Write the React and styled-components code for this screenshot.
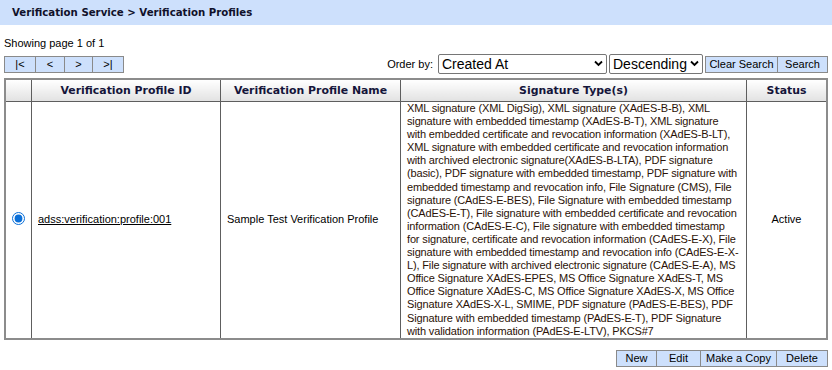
import React, { useState } from "react";
import styled, { createGlobalStyle } from "styled-components";

const GlobalStyle = createGlobalStyle`
  body {
    margin: 0;
    background: #fff;
    font-family: "Liberation Sans", Arial, sans-serif;
    font-size: 11px;
    color: #000;
  }
`;

const TitleBar = styled.div`
  height: 25px;
  background: #cde0fc;
  display: flex;
  align-items: center;
  padding-left: 12px;
  font-family: "DejaVu Sans", sans-serif;
  font-weight: bold;
  font-size: 10.2px;
  color: #10102a;
`;

const Content = styled.div`
  padding: 0 4px;
`;

const PageInfo = styled.div`
  padding-top: 12px;
  height: 17px;
  font-size: 11px;
`;

const Toolbar = styled.div`
  display: flex;
  align-items: center;
  justify-content: space-between;
  height: 20px;
`;

const Pager = styled.div`
  display: flex;
`;

const Btn = styled.button`
  height: 17px;
  width: ${(p) => p.w}px;
  background: #cde0fc;
  border: 1px solid #8a8a8a;
  margin-left: ${(p) => (p.first ? 0 : -1)}px;
  padding: 0;
  font-family: "Liberation Sans", Arial, sans-serif;
  font-size: 11px;
  color: #000;
  cursor: pointer;
`;

const OrderGroup = styled.div`
  display: flex;
  align-items: center;
  gap: 2px;
`;

const OrderLabel = styled.span`
  font-size: 11px;
  margin-right: 3px;
`;

const SelectWrap = styled.div`
  position: relative;
  width: ${(p) => p.w}px;
  height: 20px;
`;

const Select = styled.select`
  appearance: none;
  width: 100%;
  height: 20px;
  font-family: "Liberation Sans", Arial, sans-serif;
  font-size: 14px;
  border: 1px solid #767676;
  border-radius: 2px;
  background: #fff;
  padding: 0 3px;
  color: #000;
`;

const Chevron = styled.svg`
  position: absolute;
  right: 4px;
  top: 6px;
  pointer-events: none;
`;

const Table = styled.table`
  margin-top: 4px;
  width: 824px;
  border-collapse: collapse;
  border: 2px solid #8c8c8c;
`;

const Th = styled.th`
  height: 21px;
  padding: 0;
  border: 1px solid #5e5e5e;
  background: linear-gradient(#ffffff, #e2e2e2);
  font-family: "DejaVu Sans", sans-serif;
  font-size: 10.9px;
  font-weight: bold;
  color: #15153a;
  width: ${(p) => p.w}px;
`;

const Td = styled.td`
  border: 1px solid #5e5e5e;
  padding: ${(p) => (p.pad ? p.pad : "0 6px")};
  text-align: ${(p) => p.align || "left"};
  vertical-align: middle;
  font-size: 11px;
  line-height: 13.1px;
  color: ${(p) => p.color || "#000"};
`;

const SigLine = styled.span`
  display: block;
  white-space: nowrap;
  letter-spacing: -0.15px;
`;

const IdLink = styled.a`
  color: #000;
  text-decoration: underline;
`;

const Radio = styled.input`
  margin: 0;
  width: 13px;
  height: 13px;
  accent-color: #0a6fd8;
`;

const Actions = styled.div`
  display: flex;
  justify-content: flex-end;
  margin-top: 10px;
`;

const sigLines = [
  "XML signature (XML DigSig), XML signature (XAdES-B-B), XML",
  "signature with embedded timestamp (XAdES-B-T), XML signature",
  "with embedded certificate and revocation information (XAdES-B-LT),",
  "XML signature with embedded certificate and revocation information",
  "with archived electronic signature(XAdES-B-LTA), PDF signature",
  "(basic), PDF signature with embedded timestamp, PDF signature with",
  "embedded timestamp and revocation info, File Signature (CMS), File",
  "signature (CAdES-E-BES), File Signature with embedded timestamp",
  "(CAdES-E-T), File signature with embedded certificate and revocation",
  "information (CAdES-E-C), File signature with embedded timestamp",
  "for signature, certificate and revocation information (CAdES-E-X), File",
  "signature with embedded timestamp and revocation info (CAdES-E-X-",
  "L), File signature with archived electronic signature (CAdES-E-A), MS",
  "Office Signature XAdES-EPES, MS Office Signature XAdES-T, MS",
  "Office Signature XAdES-C, MS Office Signature XAdES-X, MS Office",
  "Signature XAdES-X-L, SMIME, PDF signature (PAdES-E-BES), PDF",
  "Signature with embedded timestamp (PAdES-E-T), PDF Signature",
  "with validation information (PAdES-E-LTV), PKCS#7",
];

const DropSelect = ({ w, value, label }) => (
  <SelectWrap w={w}>
    <Select defaultValue={value}>
      <option value={value}>{label}</option>
    </Select>
    <Chevron width="9" height="7" viewBox="0 0 9 7">
      <path d="M1 1.5 L4.5 5 L8 1.5" fill="none" stroke="#000" strokeWidth="1.8" />
    </Chevron>
  </SelectWrap>
);

export default function App() {
  const [selected, setSelected] = useState(true);
  return (
    <>
      <GlobalStyle />
      <TitleBar>Verification Service &gt; Verification Profiles</TitleBar>
      <Content>
        <PageInfo>Showing page 1 of 1</PageInfo>
        <Toolbar>
          <Pager>
            <Btn first w={32}>|&lt;</Btn>
            <Btn w={30}>&lt;</Btn>
            <Btn w={29}>&gt;</Btn>
            <Btn w={32}>&gt;|</Btn>
          </Pager>
          <OrderGroup>
            <OrderLabel>Order by:</OrderLabel>
            <DropSelect w={169} value="created" label="Created At" />
            <DropSelect w={94} value="desc" label="Descending" />
            <Pager>
              <Btn first w={73}>Clear Search</Btn>
              <Btn w={51}>Search</Btn>
            </Pager>
          </OrderGroup>
        </Toolbar>
        <Table>
          <thead>
            <tr>
              <Th w={25}></Th>
              <Th w={188}>Verification Profile ID</Th>
              <Th w={179}>Verification Profile Name</Th>
              <Th w={345}>Signature Type(s)</Th>
              <Th>Status</Th>
            </tr>
          </thead>
          <tbody>
            <tr>
              <Td align="center" pad="0">
                <Radio
                  type="radio"
                  checked={selected}
                  onChange={() => setSelected(true)}
                />
              </Td>
              <Td>
                <IdLink href="#">adss:verification:profile:001</IdLink>
              </Td>
              <Td>Sample Test Verification Profile</Td>
              <Td pad="0 6px" color="#2b1206">
                {sigLines.map((l, i) => (
                  <SigLine key={i}>{l}</SigLine>
                ))}
              </Td>
              <Td align="center">Active</Td>
            </tr>
          </tbody>
        </Table>
        <Actions>
          <Btn first w={41}>New</Btn>
          <Btn w={45}>Edit</Btn>
          <Btn w={77}>Make a Copy</Btn>
          <Btn w={52}>Delete</Btn>
        </Actions>
      </Content>
    </>
  );
}
